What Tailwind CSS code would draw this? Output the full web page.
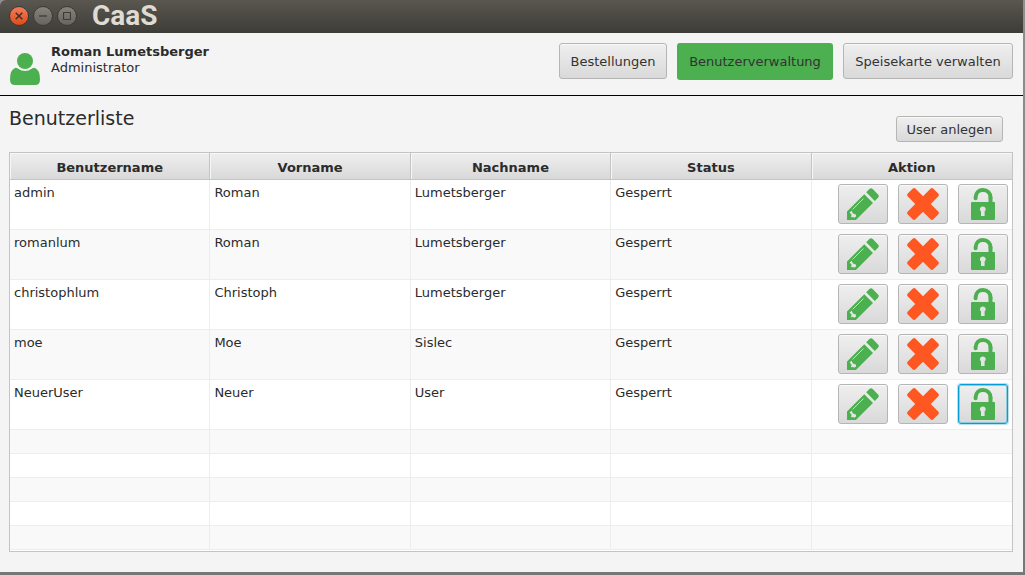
<!DOCTYPE html>
<html lang="de">
<head>
<meta charset="utf-8">
<title>CaaS</title>
<script src="https://cdn.jsdelivr.net/npm/@tailwindcss/browser@4"></script>
</head>
<body class="flex min-h-screen flex-col bg-[#777777] bg-linear-to-b from-[#8f8f8f] to-[#777777] pr-[2px] pb-[3px] font-['DejaVu_Sans','Liberation_Sans',sans-serif] text-[13px] leading-4 text-[#2b2b2b]">

<svg class="hidden" aria-hidden="true">
  <symbol id="pencil" viewBox="0 0 32 32">
    <path fill="#4caf50" d="M0 23.500 17.300 6.200 26 14.900 8.900 32H0z M19.200 4.300 22.400 1.100Q24-.5 25.700 1.100L31 6.400Q32.600 8.100 31 9.700L27.800 12.900z"/>
    <path stroke="#c4dfc5" stroke-width="1" fill="none" d="M5.500 21.500 16.500 10.500"/>
    <path fill="#e4e4e4" d="M2.600 24.600 4.600 22.800 6 25.500 8.800 26.500 9.200 28.600 7 29.800 5.900 28.700 5 29.500 3.800 28.200 4.800 27.100z"/>
  </symbol>
  <symbol id="cross" viewBox="0 0 32 32">
    <path fill="#ff5722" d="M16 8.200 23.400.8Q24.900-.6 26.400.8L31.200 5.600Q32.600 7.100 31.200 8.600L23.800 16 31.200 23.400Q32.600 24.900 31.200 26.400L26.400 31.200Q24.900 32.600 23.400 31.200L16 23.800 8.600 31.200Q7.100 32.600 5.600 31.200L.8 26.400Q-.6 24.900.8 23.400L8.200 16 .8 8.600Q-.6 7.100.8 5.600L5.600.8Q7.100-.6 8.600.8z"/>
  </symbol>
  <symbol id="unlock" viewBox="0 0 32 32">
    <path fill="none" stroke="#4caf50" stroke-width="4" stroke-linecap="round" d="M8.600 10.200V9.400C8.800 4.700 12 2 15.900 2C20.500 2 23.500 5.200 23.500 9.500"/>
    <path fill="#4caf50" d="M21.500 9H25.500V15H21.500z"/>
    <rect x="4" y="14" width="24" height="18" rx="1" fill="#4caf50"/>
    <path fill="#e4e4e4" d="M15.800 18.400A2.900 2.900 0 0 1 17.600 23.600V28H14V23.600A2.900 2.900 0 0 1 15.800 18.400z"/>
  </symbol>
</svg>

<header class="flex h-[33px] items-center gap-[4px] rounded-tl-md bg-linear-to-b from-[#59574f] to-[#3d3c37] pb-px pl-[9px]">
  <button aria-label="Schließen" class="flex size-5 items-center justify-center rounded-full border border-[#3a3934] bg-linear-to-b from-[#f37b57] to-[#df4b16]"><svg class="size-2" viewBox="0 0 8 8"><path d="m.7.7 6.600 6.600M7.300.7.7 7.300" stroke="#3c3028" stroke-width="1.500"/></svg></button>
  <button aria-label="Minimieren" class="flex size-5 items-center justify-center rounded-full border border-[#3a3934] bg-linear-to-b from-[#85837b] to-[#66645e]"><svg class="size-2" viewBox="0 0 8 8"><path d="M0 4H8" stroke="#3c3b37" stroke-width="1.300"/></svg></button>
  <button aria-label="Maximieren" class="flex size-5 items-center justify-center rounded-full border border-[#3a3934] bg-linear-to-b from-[#85837b] to-[#66645e]"><svg class="size-2" viewBox="0 0 8 8"><path d="M.5.5H7.500V7.500H.5z" fill="none" stroke="#3c3b37" stroke-width="1.200"/></svg></button>
  <span class="ml-[11px] font-['Roboto','DejaVu_Sans',sans-serif] text-[28px] leading-8 font-bold text-[#dfdbd2]">CaaS</span>
</header>

<div class="flex flex-1 flex-col bg-[#f4f4f4]">
  <div class="flex h-[63px] items-start justify-between border-b border-black px-[10px] pt-[10px]">
    <div class="flex gap-[11px]">
      <svg class="mt-[10px] h-8 w-[30px]" viewBox="0 0 30 32" fill="#4caf50" aria-hidden="true"><circle cx="15" cy="8" r="8"/><path d="M5.500 14.700Q7 14.700 8.300 15.700Q11.300 18 15 18Q18.700 18 21.700 15.700Q23 14.700 24.500 14.700Q30 16.500 30 26.500Q30 32 25 32H5Q0 32 0 26.500Q0 16.500 5.500 14.700z"/></svg>
      <div class="pt-px"><div class="font-bold">Roman Lumetsberger</div><div>Administrator</div></div>
    </div>
    <nav class="flex gap-[10px]">
      <button class="h-9 min-w-[108px] rounded-[3px] border border-[#b5b5b5] bg-linear-to-b from-[#efefef] to-[#d9d9d9] px-[9px] pt-[2px] text-[#333333] shadow-[inset_0_1px_0_#fafafa]">Bestellungen</button>
      <button class="h-[37px] min-w-[156px] rounded-[3px] bg-[#4caf50] px-[10px] text-[#333333]">Benutzerverwaltung</button>
      <button class="h-9 min-w-[170px] rounded-[3px] border border-[#b5b5b5] bg-linear-to-b from-[#efefef] to-[#d9d9d9] px-[9px] pt-[2px] text-[#333333] shadow-[inset_0_1px_0_#fafafa]">Speisekarte verwalten</button>
    </nav>
  </div>

  <main class="pr-[10px] pb-5 pl-[9px]">
    <div class="flex h-14 items-start justify-between pr-[10px]">
      <h1 class="pt-[10px] text-[19px] leading-6">Benutzerliste</h1>
      <button class="mt-5 h-[26px] min-w-[107px] rounded-[3px] border border-[#b5b5b5] bg-linear-to-b from-[#efefef] to-[#d9d9d9] px-2 pt-[2px] text-[#333333] shadow-[inset_0_1px_0_#fafafa]">User anlegen</button>
    </div>
    <div class="border border-[#c4c4c4] bg-white pb-px">
      <table class="w-full table-fixed border-separate border-spacing-0">
        <thead>
          <tr class="h-[27px] [&>th]:border-r [&>th]:border-b [&>th]:border-[#c4c4c4] [&>th]:bg-linear-to-b [&>th]:from-[#efefef] [&>th]:to-[#d9d9d9] [&>th]:p-0 [&>th]:pt-[4px] [&>th]:shadow-[inset_1px_1px_0_#f7f7f7] [&>th:last-child]:border-r-0">
            <th>Benutzername</th><th>Vorname</th><th>Nachname</th><th>Status</th><th>Aktion</th>
          </tr>
        </thead>
        <tbody id="users" class="[&_td]:border-r [&_td]:border-b [&_td]:border-[#ededed] [&_td]:p-0 [&_td]:px-[4px] [&_td]:align-top [&_td:last-child]:border-r-0 [&>tr:nth-child(even)]:bg-[#f9f9f9]"></tbody>
      </table>
    </div>
  </main>
</div>

<script>
  const users = [
    ['admin', 'Roman', 'Lumetsberger', 'Gesperrt'],
    ['romanlum', 'Roman', 'Lumetsberger', 'Gesperrt'],
    ['christophlum', 'Christoph', 'Lumetsberger', 'Gesperrt'],
    ['moe', 'Moe', 'Sislec', 'Gesperrt'],
    ['NeuerUser', 'Neuer', 'User', 'Gesperrt']
  ];
  const normal = 'border-[#b5b5b5] shadow-[inset_0_1px_0_#fafafa]';
  const focused = 'border-[#039ed3] shadow-[0_0_0_1px_#b7dfee,inset_0_0_0_1px_#8accdf]';
  const action = (icon, label, state) =>
    `<button aria-label="${label}" class="flex h-10 w-[50px] items-center justify-center rounded-[3px] border bg-linear-to-b from-[#efefef] to-[#d9d9d9] ${state}"><svg class="size-8"><use href="#${icon}"/></svg></button>`;
  const rows = users.map((u, i) =>
    `<tr class="h-[50px]">${u.map(v => `<td><div class="pt-[5px]">${v}</div></td>`).join('')}<td><div class="flex justify-end gap-[10px] pt-[4px]">${action('pencil', 'Bearbeiten', normal)}${action('cross', 'Löschen', normal)}${action('unlock', 'Entsperren', i === 4 ? focused : normal)}</div></td></tr>`);
  for (let i = 0; i < 5; i++) rows.push('<tr class="h-6"><td></td><td></td><td></td><td></td><td></td></tr>');
  document.getElementById('users').innerHTML = rows.join('');
</script>
</body>
</html>
